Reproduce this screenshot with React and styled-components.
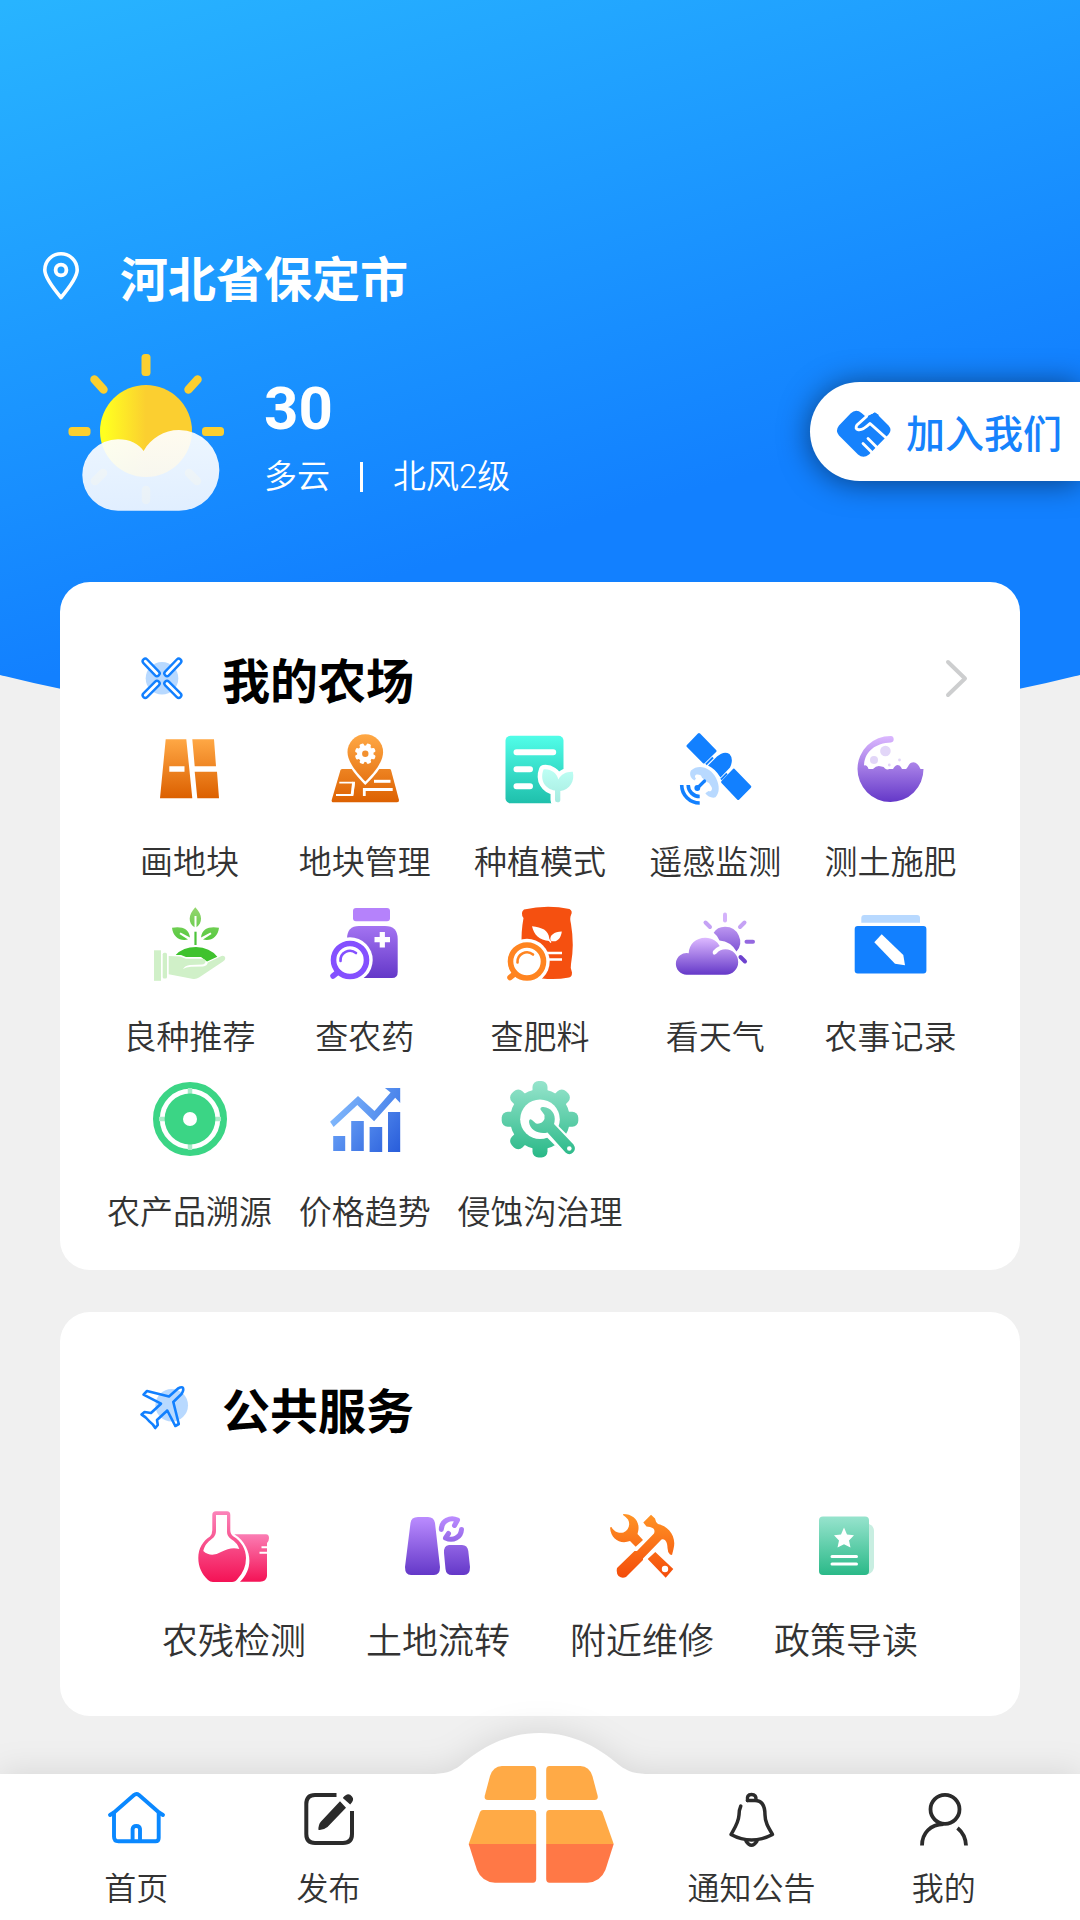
import styled, { createGlobalStyle } from "styled-components";

const GlobalStyle = createGlobalStyle`
  *,
  *::before,
  *::after {
    box-sizing: border-box;
  }

  body {
    margin: 0;
    background-color: #f0f0f0;
    color: #333;
    font-family: Roboto, "Noto Sans CJK SC", sans-serif;
    font-weight: 350;
  }

  a {
    color: inherit;
    text-decoration: none;
  }

  h1,
  h2,
  p {
    margin: 0;
  }

  svg {
    display: block;
    flex-shrink: 0;
    overflow: visible;
  }
`;

const Page = styled.div`
  display: flex;
  flex-direction: column;
  min-height: 100vh;
  overflow-x: clip;
`;

/* Wider than the page so that only the flat part of the curve shows */
const Hero = styled.header`
  margin: 0 -20%;
  padding: 251px 20% 219px;
  border-radius: 0 0 50% 50% / 0 0 190px 190px;
  background: linear-gradient(164deg, #28b4ff 63px, #1280ff 723px);
  color: #fff;
`;

const Location = styled.div`
  display: flex;
  align-items: flex-start;
  gap: 38px;
  padding-left: 40px;
  margin-bottom: 42px;
`;

const City = styled.h1`
  font-size: 48px;
  line-height: 60px;
  font-weight: 700;
`;

const Weather = styled.div`
  display: flex;
  align-items: center;
  padding-left: 66px;
`;

const WeatherText = styled.div`
  display: flex;
  flex-direction: column;
  gap: 12px;
  margin-left: 38px;
  padding-top: 3px;
`;

const Temperature = styled.p`
  font-size: 60px;
  line-height: 72px;
  font-weight: 700;
`;

const Conditions = styled.p`
  display: flex;
  align-items: center;
  font-size: 33px;
  line-height: 40px;
`;

const Divider = styled.span`
  width: 3px;
  height: 30px;
  margin: 0 30px;
  background-color: #fff;
`;

const JoinButton = styled.button`
  display: flex;
  align-items: center;
  gap: 14px;
  height: 99px;
  margin: 0 0 3px auto;
  padding: 0 18px 2px 26px;
  border: none;
  border-radius: 50px 0 0 50px;
  background-color: #fff;
  box-shadow: 0 2px 30px rgba(0, 0, 0, 0.5);
  color: #1682fc;
  font-family: inherit;
  font-size: 39px;
  font-weight: 500;
  cursor: pointer;
`;

const Main = styled.main`
  display: flex;
  flex: 1;
  flex-direction: column;
  gap: 42px;
  margin-top: -150px;
  padding: 0 60px 58px;
`;

const Card = styled.section`
  padding: 67px 0 32px;
  border-radius: 30px;
  background-color: #fff;
`;

const CardHeader = styled.div`
  display: flex;
  align-items: center;
  gap: 36px;
  padding: 0 51px 0 78px;
`;

const CardTitle = styled.h2`
  padding-top: 4px;
  color: #000;
  font-size: 48px;
  line-height: 60px;
  font-weight: 700;
`;

const MoreLink = styled.a`
  margin-left: auto;
`;

const Grid = styled.div`
  display: grid;
  grid-template-columns: repeat(${(props) => props.$columns}, 1fr);
  padding: 0 ${(props) => (props.$columns === 5 ? 42 : 72)}px;
`;

const Item = styled.a`
  display: flex;
  flex-direction: column;
  align-items: center;
  gap: 34px;
  padding: ${(props) => (props.$large ? "63px 0 20px" : "16px 0 5px")};
  font-size: ${(props) => (props.$large ? 36 : 33)}px;
  line-height: ${(props) => (props.$large ? 44 : 40)}px;
  white-space: nowrap;
`;

const Nav = styled.nav`
  position: sticky;
  bottom: 0;
  display: grid;
  grid-template-columns: 1fr 1fr 1.2fr 1fr 1fr;
  padding: 15px 40px 11px;
  background-color: #fff;
  filter: drop-shadow(0 -2px 16px rgba(0, 0, 0, 0.1));
`;

const Bump = styled.svg`
  position: absolute;
  bottom: calc(100% - 1px);
  left: 50%;
  transform: translateX(-50%);
`;

const NavItem = styled.a`
  display: flex;
  flex-direction: column;
  align-items: center;
  gap: 20px;
  font-size: 32px;
  line-height: 40px;
  white-space: nowrap;
`;

const NavCenter = styled.a`
  position: relative;
  justify-self: center;
  height: 120px;
  margin: -24px 0 -11px;
`;

function Gradient({ id, from, to, top = 5, bottom = 74, x2 = 0 }) {
  return (
    <linearGradient
      id={id}
      gradientUnits="userSpaceOnUse"
      x1="0"
      y1={top}
      x2={x2}
      y2={bottom}
    >
      <stop offset="0" stopColor={from} />
      <stop offset="1" stopColor={to} />
    </linearGradient>
  );
}

function Icon({ size = 80, children }) {
  return (
    <svg
      width={size}
      height={size}
      viewBox={`0 0 ${size} ${size}`}
      fill="none"
      aria-hidden="true"
    >
      {children}
    </svg>
  );
}

function PinIcon() {
  return (
    <svg width="42" height="50" viewBox="0 0 42 50" fill="none" stroke="#fff" aria-hidden="true">
      <path
        d="M21 46.5C16 40.500 4.800 27 4.800 19A16.200 16.200 0 0 1 37.200 19C37.200 27 26 40.500 21 46.500Z"
        strokeWidth="3.600"
        strokeLinejoin="round"
      />
      <circle cx="21" cy="19" r="5.400" strokeWidth="3.800" />
    </svg>
  );
}

function CloudyIcon() {
  return (
    <Icon size={160}>
      <defs>
        <linearGradient id="sun">
          <stop offset="0.05" stopColor="#ffff20" />
          <stop offset="0.5" stopColor="#fbcf30" />
        </linearGradient>
        <linearGradient id="cloud" x2="0" y2="1">
          <stop offset="0" stopColor="#fff" />
          <stop offset="1" stopColor="#f2f7ff" />
        </linearGradient>
      </defs>
      <g fill="#fbcf30">
        <rect x="75.500" y="1" width="9" height="22" rx="3.500" />
        <rect x="2.500" y="74" width="22" height="9" rx="3.500" />
        <rect x="136" y="74" width="22" height="9" rx="3.500" />
      </g>
      <g stroke="#fbcf30" strokeWidth="8.500" strokeLinecap="round">
        <path d="M28.500 26.500L37.500 36.500M131.500 26.500L122.500 36.500" />
        <path d="M37 120L29 128M123 120L131 128M80 137V147" opacity="0.4" />
      </g>
      <circle cx="80" cy="78" r="46" fill="url(#sun)" />
      <path
        d="M52 157.700A35.700 35.700 0 0 1 52 86.300C64 86.300 73 91 77.600 98C85 85 98 77 113 77A40.350 40.350 0 0 1 113 157.700Z"
        fill="url(#cloud)"
        fillOpacity="0.92"
      />
    </Icon>
  );
}

function HandshakeIcon() {
  return (
    <Icon size={56}>
      <g transform="translate(0 3)">
        <path
          d="M14.500 7.500Q20 2.500 25.500 7L29 10L37 7.500Q38.700 5.500 40.500 7.500L52.500 19.500Q56.500 24 52.500 28.500L33 48.500Q27.300 53 22 48.500L3 29.500Q-1 24.500 3 19.500Z"
          fill="#1682fc"
        />
        <path d="M25 2L30 11L41 5L38 0Z" fill="#fff" />
        <path d="M27.500 10.500L31 13.500L38.500 6.500L43 9L34 18Z" fill="#1682fc" />
        <path
          d="M30.500 10.500L21 19Q18.500 22.500 22.500 23.700Q26.500 24.500 34 17.500L52.500 34"
          stroke="#fff"
          strokeWidth="3"
          strokeLinecap="round"
          strokeLinejoin="round"
        />
        <path
          d="M32 32.500L42 42.500M27 37.500L36.500 47"
          stroke="#fff"
          strokeWidth="2.800"
          strokeLinecap="round"
        />
      </g>
    </Icon>
  );
}

function PropellerIcon() {
  const blades = "M7.300 4.300L19 16.500M40.700 4.300L29 16.500M7.300 38.300L19 26.500M40.700 38.300L29 26.500";

  return (
    <Icon size={48}>
      <circle cx="24" cy="21.300" r="16.300" fill="#b8d9ff" />
      <path d={blades} stroke="#1280ff" strokeWidth="7.600" strokeLinecap="round" />
      <path d={blades} stroke="#fff" strokeWidth="2.800" strokeLinecap="round" />
    </Icon>
  );
}

function PlaneIcon() {
  return (
    <Icon size={48}>
      <circle cx="33.700" cy="18.300" r="16.300" fill="#b8d9ff" />
      <path
        d="M31 9.500L40 1.500Q44 -0.500 45 1Q46 3 43.500 7L35.300 15L40.800 37L37.300 39L29.300 23.500L19 33L19.800 38L17.300 41Q15 37 11.500 34.500Q8 30 3.500 27.500L6.500 25L13 26L23 16.700L5.500 7.700L9 4Z"
        stroke="#1280ff"
        strokeWidth="2.600"
        strokeLinejoin="round"
      />
    </Icon>
  );
}

function ChevronIcon() {
  return (
    <svg width="24" height="42" viewBox="0 0 24 42" fill="none" aria-hidden="true">
      <path
        d="M3 2L20 18.500L3 35"
        stroke="#cdcecf"
        strokeWidth="4"
        strokeLinecap="round"
        strokeLinejoin="round"
      />
    </svg>
  );
}

function DrawFieldIcon() {
  return (
    <Icon>
      <Gradient id="field" from="#ffa845" to="#dc6000" top={10} bottom={69} />
      <path
        d="M15.700 10.300H36.300L42.300 69.300H10ZM19.300 37.300V42.700H34.500V37.300ZM42.300 10.300H64L66 37.200H44.700ZM44.700 42.700H67L69 69.300H47.300Z"
        fill="url(#field)"
        fillRule="evenodd"
      />
    </Icon>
  );
}

function FieldManageIcon() {
  const teeth = [0, 45, 90, 135, 180, 225, 270, 315];

  return (
    <Icon>
      <Gradient id="manage" from="#ffa845" to="#dc6000" />
      <path
        d="M17.500 40H64.500Q65.700 40 66 41L74 71Q74.300 73.300 72 73.300H8.500Q6.300 73.300 6.700 71L15.500 41Q16 40 17.500 40Z"
        fill="url(#manage)"
      />
      <path
        d="M40.300 52.500C34 46 22.500 34 22.500 23A17.800 17.800 0 0 1 58.100 23C58.100 34 47 46 40.300 52.500Z"
        fill="url(#manage)"
        stroke="#fff"
        strokeWidth="5"
        paintOrder="stroke"
      />
      <circle cx="40.300" cy="24.700" r="8.300" fill="#fff" />
      {teeth.map((angle) => (
        <rect
          key={angle}
          x="38"
          y="14.200"
          width="4.600"
          height="6"
          rx="1.500"
          fill="#fff"
          transform={`rotate(${angle + 22} 40.300 24.700)`}
        />
      ))}
      <circle cx="40.300" cy="24.700" r="3.200" fill="#f2902f" />
      <g stroke="#fff">
        <path d="M14.300 53.700H29L27.300 66H11" strokeWidth="1.800" />
        <path d="M28.600 53L27 66.500" strokeWidth="2.800" />
        <path d="M49 52.300H65.500" strokeWidth="3" />
        <path d="M39.300 67V60.500H67.700" strokeWidth="2.800" />
      </g>
    </Icon>
  );
}

function PlantModeIcon() {
  return (
    <Icon>
      <Gradient id="doc" from="#52ffea" to="#1fc0ac" />
      <Gradient id="leaf" from="#bdfff4" to="#a6eae0" top={40} />
      <rect x="5.500" y="6.700" width="58" height="67.600" rx="5" fill="url(#doc)" />
      <path
        d="M16.500 23.300H53.200M16.500 40.300H30M16.500 57.300H30"
        stroke="#fff"
        strokeWidth="6"
        strokeLinecap="round"
      />
      <path
        d="M43.500 40.500C50 39.500 57 44 58.300 50.500C61 45 67 42.300 72.800 42.700C75 52 70 60.500 60.300 62V71Q60.300 73.300 57.500 73.300Q55 73.300 55 71V61.500C45 60 39.500 51 43.500 40.500Z"
        fill="url(#leaf)"
        stroke="#fff"
        strokeWidth="9"
        strokeLinejoin="round"
        paintOrder="stroke"
      />
    </Icon>
  );
}

function SatelliteIcon() {
  return (
    <Icon>
      <g fill="#1280ff" stroke="#1280ff" strokeWidth="3" strokeLinejoin="round">
        <path d="M24 5.500L40 22L28.800 33L13 17Z" />
        <path d="M58.800 41.200L74.800 57.700L63.200 69.500L47.600 53Z" />
      </g>
      <path
        d="M33 36.500L42 27.500Q49 21.500 54.500 25Q59 30 55 38.500L45.500 48.500Q40 39.500 33 36.500Z"
        fill="#1280ff"
      />
      <path d="M31 35.500L38 28.500M46 50.500L52 44.500" stroke="#1280ff" strokeWidth="2" />
      <path
        d="M16 41.500C24 34.500 36 39 41 49C45 57 44.500 64 40.500 68.300C37 69.500 32.500 67.500 30.300 64.300L33.500 62C36 63.500 38 60 36.500 58L34 54L28 51L26 46.500C22 44 18 46 21 49.500L19.500 51.500C15.500 49 14 45 16 41.500Z"
        fill="#b8d9ff"
      />
      <path d="M30 51.500L23 58.500" stroke="#fff" strokeWidth="7" />
      <path d="M29.500 52L22.500 59" stroke="#1280ff" strokeWidth="3.200" strokeLinecap="round" />
      <circle cx="22.300" cy="59" r="2.900" fill="#1280ff" />
      <path
        d="M6.700 56A18 18 0 0 0 24.700 74M13.200 56A11.500 11.500 0 0 0 24.700 67.500"
        stroke="#1280ff"
        strokeWidth="3.600"
      />
    </Icon>
  );
}

function SoilIcon() {
  return (
    <Icon>
      <Gradient id="soil" from="#dcb8ff" to="#6438c8" top={7} bottom={73} />
      <path
        d="M41 7Q43.700 7.300 43.700 10.300Q43.700 13 41 13.500C25 14 14.500 23 14 36.500Q17 35.500 18.500 40H23Q27 35.500 31.500 37.500Q34 37.500 35 39.500Q37 41 39.500 40H43Q46 34.500 49.500 36.500Q51 37.500 52 40H56C58.500 38.500 58.500 33.300 63.500 33.300Q67.500 33.300 70.500 40H73.500A33 33 0 1 1 41 7Z"
        fill="url(#soil)"
      />
      <g fill="#e2d6f8">
        <circle cx="35.400" cy="22" r="5.300" />
        <circle cx="24" cy="31" r="4" />
        <circle cx="49.500" cy="31" r="1.400" />
        <circle cx="39.300" cy="36" r="1.400" />
      </g>
    </Icon>
  );
}

function SeedIcon() {
  return (
    <Icon>
      <Gradient id="sprout" from="#96d670" to="#52c83c" top={3} bottom={38} />
      <g fill="url(#sprout)">
        <path d="M45.300 3.300C53 11 52.500 19 46.500 23.300V12H44.500V23.300C38 19 38 11 45.300 3.300Z" />
        <path d="M22 23.700C31 22 39 24 40 33.500L30.500 28.500L29.500 30L38 35.500C30 37.500 23 33 22 23.700Z" />
        <path d="M69 23.700C60 22 52 24 51 33.500L60.500 28.500L61.500 30L53 35.500C61 37.500 68 33 69 23.700Z" />
      </g>
      <path d="M45.500 27.700V41" stroke="#4cc43a" strokeWidth="2.200" />
      <path d="M25.700 51Q33 43 46 43Q60 43.500 67.300 52.700L57 57.500L51 53H36L31 51Z" fill="#3fc22e" />
      <g fill="#d0f0c8">
        <rect x="4" y="46.300" width="7" height="30.500" />
        <rect x="12.700" y="48.700" width="4.300" height="25.700" rx="1.500" />
        <path d="M18.700 52L30 52.500L36 54.700H52Q55.500 55 55.500 57.500Q55.500 60 52 60.500L40 61Q35 61.500 33 65Q36 63 41 62.800L53 62.500Q57.300 62 57.800 58.500L71.500 52Q74.500 51 75.300 54Q75.300 56 73 57.500L49 73.500Q46.500 75.500 42 74.800L18.700 70.300Z" />
      </g>
    </Icon>
  );
}

function Lens({ cx, cy, color }) {
  return (
    <>
      <circle cx={cx} cy={cy} r="22.700" fill="#fff" />
      <circle cx={cx} cy={cy} r="16.500" stroke={color} strokeWidth="5.600" />
      <path
        d={`M${cx - 9.500} ${cy + 1}A9.500 9.500 0 0 1 ${cx + 6} ${cy - 7}`}
        stroke={color}
        strokeWidth="2.600"
        strokeLinecap="round"
      />
      <path
        d={`M${cx - 12} ${cy + 12}L${cx - 17} ${cy + 16}`}
        stroke={color}
        strokeWidth="5.500"
        strokeLinecap="round"
      />
    </>
  );
}

function PesticideIcon() {
  return (
    <Icon>
      <Gradient id="bottle" from="#b887ff" to="#6438c8" />
      <rect x="28" y="4" width="37" height="13.300" rx="3" fill="#b582fb" />
      <path
        d="M34 22H60Q72.700 22 72.700 35V68Q72.700 74 67 74H22V35Q22 22 34 22Z"
        fill="url(#bottle)"
      />
      <path d="M57.300 28V43.500M49.500 35.700H65" stroke="#fff" strokeWidth="5.200" />
      <Lens cx={25} cy={56} color="#8450ff" />
    </Icon>
  );
}

function FertilizerIcon() {
  return (
    <Icon>
      <path
        d="M24 5.500Q47 0.500 69.500 5Q73 7 71 11Q69.500 14 71 20Q74.500 41 71 60Q70 64 72 68.500Q72 73 69 73.500Q56 76 42 74.500L21.700 40Q21 28 23.500 14Q20 9 24 5.500Z"
        fill="#f55010"
      />
      <path
        d="M32 22.300C42 23.500 48.500 26 49.300 34.500L49.500 37C39 36 34 31 32 22.300ZM61.800 27.500C54 28 49.500 31 50.500 36.500C57 39.500 61 34 61.800 27.500Z"
        fill="#fff"
      />
      <path d="M47.500 34L51 38.500" stroke="#fff" strokeWidth="1.400" />
      <path d="M46 49H62M46 55.500H62" stroke="#fff" strokeWidth="2.400" />
      <Lens cx={27} cy={57.500} color="#ff8420" />
    </Icon>
  );
}

function WeatherIcon() {
  return (
    <Icon>
      <Gradient id="sunny" from="#dcb8ff" to="#6438c8" top={10} bottom={58} />
      <Gradient id="cloudy" from="#dcb8ff" to="#6438c8" top={34} bottom={71} />
      <path
        d="M38.700 28.700Q42 22.800 50 22.700A15 15 0 0 1 61.500 47.500Q56 37.500 44.500 36.500Q42.500 31.500 38.700 28.700Z"
        fill="url(#sunny)"
      />
      <g strokeWidth="4" strokeLinecap="round">
        <path d="M50 10.500V16.500" stroke="#d4b2fb" />
        <path d="M30.500 18.500L35 23M69.500 18.500L65 23" stroke="#c5a2f5" />
        <path d="M71.500 37.700H78" stroke="#9468e0" />
        <path d="M65.500 53L70 57.500" stroke="#6d42ce" />
      </g>
      <path
        d="M12 70.700A10.800 10.800 0 1 1 13.700 49.300C14 40 21 33.700 30.300 33.700C37.500 33.700 42.500 37.500 44.700 42Q41 43.500 38 47Q37 49.500 38.500 50.500Q40 51 41.500 49.500Q45 45.300 50.500 45.300A12.700 12.700 0 0 1 50.500 70.700Z"
        fill="url(#cloudy)"
      />
    </Icon>
  );
}

function RecordIcon() {
  return (
    <Icon>
      <path d="M11.300 18.700V14Q11.300 11 14.300 11H67Q70 11 70 14V18.700Z" fill="#b8d9ff" />
      <rect x="4.700" y="22" width="71.700" height="47.500" rx="3" fill="#1280ff" />
      <path d="M31.700 30.300L53.300 51L55 61.300L45 59.700L24.300 38.300Z" fill="#fff" />
    </Icon>
  );
}

function TraceIcon() {
  return (
    <Icon>
      <circle cx="40" cy="40" r="33.600" stroke="#3bd585" strokeWidth="6.800" />
      <path d="M40 9V15M40 65V71M9 40H15M65 40H71" stroke="#a8ecc8" strokeWidth="4.500" />
      <circle cx="40" cy="40" r="25.400" fill="#3bd585" />
      <circle cx="40" cy="40" r="7" fill="#fff" />
    </Icon>
  );
}

function PriceIcon() {
  return (
    <Icon>
      <Gradient id="line" from="#8cc2ff" to="#4680ea" top={10} bottom={30} x2={76} />
      <Gradient id="bars" from="#7ab4ff" to="#2458d8" top={20} bottom={80} x2={76} />
      <path
        d="M8.200 57H20.200V72H8.200ZM26.200 42H38.800V72H26.200ZM44.600 48H57.200V73H44.600ZM63 33H75.200V73H63Z"
        fill="url(#bars)"
      />
      <path
        d="M5.100 42.700L33 17L49.500 32L65.600 13.500L59.900 9H75.200V24L70.200 18.700L49.100 42.300L32.300 26L8.600 48Z"
        fill="url(#line)"
      />
    </Icon>
  );
}

function GullyIcon() {
  const teeth = [0, 45, 90, 135, 180, 225, 270, 315];

  return (
    <Icon>
      <Gradient id="gear" from="#96e4cc" to="#2ab988" top={2} bottom={78} />
      <mask id="gear-mask" maskUnits="userSpaceOnUse" x="0" y="0" width="80" height="80">
        <g fill="#fff">
          <circle cx="40" cy="40.300" r="30" />
          {teeth.map((angle) => (
            <rect
              key={angle}
              x="32.500"
              y="2"
              width="15"
              height="20"
              rx="6"
              transform={`rotate(${angle} 40 40.300)`}
            />
          ))}
        </g>
        <circle cx="40" cy="40.300" r="19.800" fill="#000" />
        <path d="M50 50L72 72" stroke="#000" strokeWidth="16" />
      </mask>
      <rect width="80" height="80" fill="url(#gear)" mask="url(#gear-mask)" />
      <path
        d="M40.500 30.500Q40 27.500 43.500 28C51 28.500 56 35 54.500 43L54 45L73.500 65.500Q76.500 70 73 73.500Q69.500 77 65.500 73.500L47.500 53.500C40 55.500 30 52 29 43Q29 39 32 41L36 44.500Q42 45.500 44.500 40V36Z"
        fill="url(#gear)"
      />
      <circle cx="69.300" cy="69.500" r="2.300" fill="#fff" />
    </Icon>
  );
}

function ResidueIcon() {
  return (
    <Icon>
      <Gradient id="flask" from="#fb84ba" to="#f41255" top={5} bottom={76} />
      <Gradient id="beaker" from="#fb84ba" to="#f41255" top={25} bottom={76} />
      <path
        d="M40.300 28.300H72Q75 28.500 75 32Q75 35 73 37V70Q72.500 75.700 66 75.700H46C56 66 58 53 52 41Q48 33 40.300 28.300Z"
        fill="url(#beaker)"
      />
      <path d="M67.500 41.200H74M65.500 46.800H73" stroke="#fff" strokeWidth="2" />
      <path
        d="M22 5.300H33Q36.300 5.300 36.300 9V24Q36.300 28 39.500 30.500C47 35 52 43 52 52Q52 64 43.500 73Q41.500 76 38 76H19Q16 76 14 74C8 68.500 4.300 61 4.300 52C4.300 42 9 35 16 30.500Q18.300 28 18.300 24V9Q18.300 5.300 22 5.300ZM22 9V25Q22 30 18 32.800C13 36.500 10.500 40 9.300 45Q17 52 27 46Q37 40.500 45.300 43Q43.500 37 37 33Q33 30 33 26V9Z"
        fill="url(#flask)"
        fillRule="evenodd"
      />
    </Icon>
  );
}

function LandTransferIcon() {
  return (
    <Icon>
      <Gradient id="land" from="#bb8cff" to="#6438c8" top={11} bottom={69} />
      <g fill="url(#land)">
        <path d="M20 11H30Q36 11 37 17L42 61Q42 69 36 69H13Q7 69 7 61L12.500 17Q13 11 20 11Z" />
        <path d="M51 39H64Q69.500 39 70.300 45L72 61Q72 69 66 69H54Q48 69 47.500 63L46 47Q45.500 39.500 51 39Z" />
      </g>
      <g stroke="url(#land)" strokeWidth="5" strokeLinecap="round" strokeLinejoin="round">
        <path d="M43.300 23.500C43.500 15 52 10.500 59.500 14L56.500 19.500" />
        <path d="M63.500 23.500C63 31.500 55 35.500 47.500 32L50.500 27.500" />
      </g>
    </Icon>
  );
}

function RepairIcon() {
  return (
    <Icon>
      <Gradient id="tools" from="#ff9426" to="#f44c0a" top={8} bottom={72} />
      <g fill="url(#tools)">
        <path d="M21.300 8C31 8 38 15 36.300 24.500L35.500 28L41 34L33.700 40.700L28 35C19 38.500 9 34 8 21.500L9.500 21C12 26 17 27.500 21.500 26.500C27 24 28.500 18 26 13.500Q24 11 21 9Z" />
        <path
          d="M53.300 46L71.300 63L63.700 71.700L45.700 53ZM63 59.800A3.200 3.200 0 1 0 63 66.200A3.200 3.200 0 1 0 63 59.800Z"
          fillRule="evenodd"
        />
        <path d="M49 8.700L53 12.500Q53.500 16 56 18C66 20 75 30 71.500 43L70 49L68 48.500Q65.500 46 65.500 42C65.500 36 63 32 59.500 33.500L41 52.500V54L24 71Q20 73 16.500 70Q14 67 15 62L32.500 45H35L52 27.500Q54 22.500 48 21L44.500 20.500L41.300 16.500Z" />
      </g>
    </Icon>
  );
}

function PolicyIcon() {
  return (
    <Icon>
      <Gradient id="policy" from="#98e4ce" to="#2ab988" top={10} bottom={69} />
      <path d="M60 18H63Q68 20 68 25V61Q67.500 66 63 68H60Z" fill="#c8eee1" />
      <rect x="13" y="10.500" width="50" height="58.500" rx="4" fill="url(#policy)" />
      <path
        d="M38 21.500L41 28.500L48 29.300L43 34.500L44.500 41.500L38 38.300L31.500 41.500L33 34.500L28 29.300L35 28.500Z"
        fill="#fff"
      />
      <path
        d="M26 50.500H50.500M26 58H50.500"
        stroke="#fff"
        strokeWidth="3"
        strokeLinecap="round"
      />
    </Icon>
  );
}

function HomeIcon() {
  return (
    <Icon size={60}>
      <g stroke="#0a88ff" strokeWidth="3.900" strokeLinecap="round" strokeLinejoin="round">
        <path d="M4 26L8 23.500L28 6Q30.400 4 33 6L53 23.500L57 26" />
        <path d="M8 24V47.500Q8 52.300 12.500 52.300H49.500Q52.700 52.300 52.700 49V24" />
        <path d="M26.600 51.500V40Q27 37 30.300 37Q33.700 37 34 40V51.500" />
      </g>
    </Icon>
  );
}

function PublishIcon() {
  return (
    <Icon size={60}>
      <path
        d="M38.500 5.900H17Q8.300 6 8.300 15V45Q8.300 54 17 54H45Q54 54 54 45V22"
        stroke="#2b2b2b"
        strokeWidth="4"
      />
      <path
        d="M20.500 41Q20 36 23 32.500L42 12.300L48 18.700L29.500 38Q25 41.500 20.500 41ZM44.800 9Q50 2.500 54 7.500Q57 10.500 52.200 15.500Z"
        fill="#2b2b2b"
      />
    </Icon>
  );
}

function BellIcon() {
  return (
    <Icon size={60}>
      <g stroke="#2b2b2b" strokeWidth="3.500" strokeLinecap="round" strokeLinejoin="round">
        <path d="M18.800 17Q17 21 17 26C16.500 34 12 40 9 45.500Q29.500 56.500 50.500 45.500C46 38 43 33 43 26C43 17 40 11.500 33 11.500H25.500" />
        <path d="M25.500 11.500Q24.500 5.500 29.500 5.500Q34.500 5.500 34 11" />
        <path d="M24 52Q29.500 60.500 35 52" />
      </g>
    </Icon>
  );
}

function ProfileIcon() {
  return (
    <Icon size={60}>
      <g stroke="#2b2b2b" strokeWidth="3.800">
        <circle cx="31" cy="20.300" r="14.500" />
        <path d="M8 56.500C8 44 16.500 35.500 29.500 35M43.500 39Q51.500 45.500 52 56.500" />
      </g>
    </Icon>
  );
}

function LogoHalf() {
  return (
    <>
      <path d="M36 1H67Q70.200 1 70.200 5V31Q70.200 35 67 35H22Q18 35 18.700 31L24 11Q27 1.500 36 1Z" fill="#ffaa46" />
      <path d="M17 45H67Q70.200 45 70.200 49V79H2.700L14 47Q15 45 17 45Z" fill="#ffaa46" />
      <path d="M2.700 79H70.200V114Q70.200 117.700 67 117.700H29Q16 117 11 105Z" fill="#ff7846" />
    </>
  );
}

function Logo() {
  return (
    <svg width="150" height="120" viewBox="-1 0 150 120" aria-hidden="true">
      <LogoHalf />
      <g transform="translate(150.400) scale(-1 1)">
        <LogoHalf />
      </g>
    </svg>
  );
}

const farmItems = [
  { label: "画地块", icon: <DrawFieldIcon /> },
  { label: "地块管理", icon: <FieldManageIcon /> },
  { label: "种植模式", icon: <PlantModeIcon /> },
  { label: "遥感监测", icon: <SatelliteIcon /> },
  { label: "测土施肥", icon: <SoilIcon /> },
  { label: "良种推荐", icon: <SeedIcon /> },
  { label: "查农药", icon: <PesticideIcon /> },
  { label: "查肥料", icon: <FertilizerIcon /> },
  { label: "看天气", icon: <WeatherIcon /> },
  { label: "农事记录", icon: <RecordIcon /> },
  { label: "农产品溯源", icon: <TraceIcon /> },
  { label: "价格趋势", icon: <PriceIcon /> },
  { label: "侵蚀沟治理", icon: <GullyIcon /> },
];

const serviceItems = [
  { label: "农残检测", icon: <ResidueIcon /> },
  { label: "土地流转", icon: <LandTransferIcon /> },
  { label: "附近维修", icon: <RepairIcon /> },
  { label: "政策导读", icon: <PolicyIcon /> },
];

function ItemGrid({ items, columns, large }) {
  return (
    <Grid $columns={columns}>
      {items.map((item) => (
        <Item key={item.label} href="#" $large={large}>
          {item.icon}
          <span>{item.label}</span>
        </Item>
      ))}
    </Grid>
  );
}

function NavLink({ label, icon }) {
  return (
    <NavItem href="#">
      {icon}
      <span>{label}</span>
    </NavItem>
  );
}

function App() {
  return (
    <Page>
      <GlobalStyle />
      <Hero>
        <Location>
          <PinIcon />
          <City>河北省保定市</City>
        </Location>
        <Weather>
          <CloudyIcon />
          <WeatherText>
            <Temperature>30</Temperature>
            <Conditions>
              <span>多云</span>
              <Divider />
              <span>北风2级</span>
            </Conditions>
          </WeatherText>
          <JoinButton type="button">
            <HandshakeIcon />
            加入我们
          </JoinButton>
        </Weather>
      </Hero>

      <Main>
        <Card>
          <CardHeader>
            <PropellerIcon />
            <CardTitle>我的农场</CardTitle>
            <MoreLink href="#" aria-label="我的农场">
              <ChevronIcon />
            </MoreLink>
          </CardHeader>
          <ItemGrid items={farmItems} columns={5} />
        </Card>

        <Card>
          <CardHeader>
            <PlaneIcon />
            <CardTitle>公共服务</CardTitle>
          </CardHeader>
          <ItemGrid items={serviceItems} columns={4} large />
        </Card>
      </Main>

      <Nav>
        <Bump width="220" height="43" viewBox="0 0 220 43" aria-hidden="true">
          <path
            d="M0 42C14 42 22 40 31 33C50 17 75 1 110 1C145 1 170 17 189 33C198 40 206 42 220 42V43H0Z"
            fill="#fff"
          />
        </Bump>
        <NavLink label="首页" icon={<HomeIcon />} />
        <NavLink label="发布" icon={<PublishIcon />} />
        <NavCenter href="#" aria-label="农场">
          <Logo />
        </NavCenter>
        <NavLink label="通知公告" icon={<BellIcon />} />
        <NavLink label="我的" icon={<ProfileIcon />} />
      </Nav>
    </Page>
  );
}

export default App;
